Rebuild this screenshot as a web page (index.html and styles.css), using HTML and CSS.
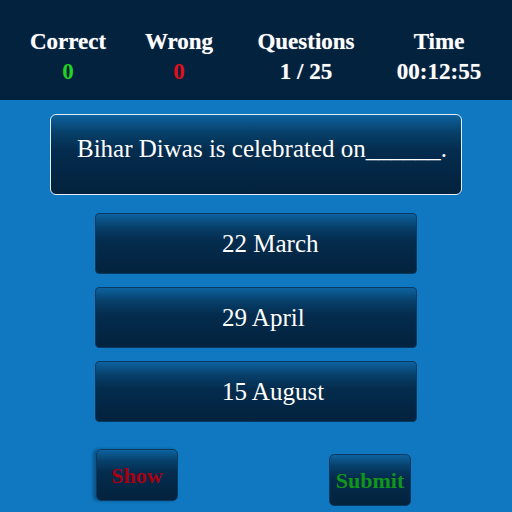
FILE: index.html
```html
<!DOCTYPE html>
<html>
<head>
<meta charset="utf-8">
<link rel="stylesheet" href="styles.css">
</head>
<body>
<header class="stats">
  <div class="stat c1"><div class="label">Correct</div><div class="value green">0</div></div>
  <div class="stat c2"><div class="label">Wrong</div><div class="value red">0</div></div>
  <div class="stat c3"><div class="label">Questions</div><div class="value">1 / 25</div></div>
  <div class="stat c4"><div class="label">Time</div><div class="value">00:12:55</div></div>
</header>
<main class="quiz">
  <div class="question">Bihar Diwas is celebrated on______.</div>
  <div class="options">
    <div class="option">22 March</div>
    <div class="option">29 April</div>
    <div class="option">15 August</div>
  </div>
  <div class="actions">
    <div class="btn show">Show</div>
    <div class="btn submit">Submit</div>
  </div>
</main>
</body>
</html>
```

FILE: styles.css
```css
* { box-sizing: border-box; }
html, body { margin: 0; padding: 0; }
body {
  background: #0f78c0;
  font-family: "Liberation Serif", "Times New Roman", serif;
  color: #fff;
  width: 512px;
  height: 512px;
  overflow: hidden;
}
.stats {
  background: #03223d;
  height: 100px;
  padding: 27px 0 0 14px;
  display: flex;
}
.stat {
  text-align: center;
  font-weight: bold;
  font-size: 23px;
  line-height: 30px;
  text-shadow: 0 0 1px rgba(255,255,255,0.5);
}
.c1 { width: 108px; }
.c2 { width: 114px; }
.c3 { width: 140px; }
.c4 { width: 126px; }
.value.green { color: #22d322; text-shadow: none; }
.value.red { color: #e0101c; text-shadow: none; }

.quiz { padding: 14px 0 0 0; }
.question {
  margin-left: 50px;
  width: 412px;
  height: 81px;
  border: 1px solid #e6eef5;
  border-radius: 6px;
  background: linear-gradient(to bottom, #0d62a0 0%, #07406a 22%, #042c4e 45%, #03223d 100%);
  font-size: 25px;
  line-height: 28.75px;
  padding: 20px 0 0 26px;
  white-space: nowrap;
}
.options {
  margin: 18px 0 0 95px;
  width: 322px;
  display: flex;
  flex-direction: column;
  gap: 13px;
}
.option {
  height: 61px;
  border: 1px solid #0a3a62;
  border-radius: 4px;
  background: linear-gradient(to bottom, #0d62a0 0%, #07406a 22%, #042c4e 45%, #03223d 100%);
  font-size: 25px;
  line-height: 28.75px;
  padding: 16px 0 0 126px;
  white-space: nowrap;
}
.actions {
  display: flex;
  align-items: flex-start;
  padding: 27px 0 0 96px;
}
.btn {
  width: 82px;
  height: 52px;
  border: 1px solid #0a3a62;
  border-radius: 5px;
  background: linear-gradient(to bottom, #0d62a0 0%, #07406a 22%, #042c4e 45%, #03223d 100%);
  font-weight: bold;
  font-size: 22px;
  line-height: 52px;
  text-align: center;
}
.show {
  color: #a80012;
  box-shadow: -3px 0 3px rgba(0,20,40,0.35);
}
.submit {
  color: #11951a;
  margin: 5px 0 0 151px;
}
```
